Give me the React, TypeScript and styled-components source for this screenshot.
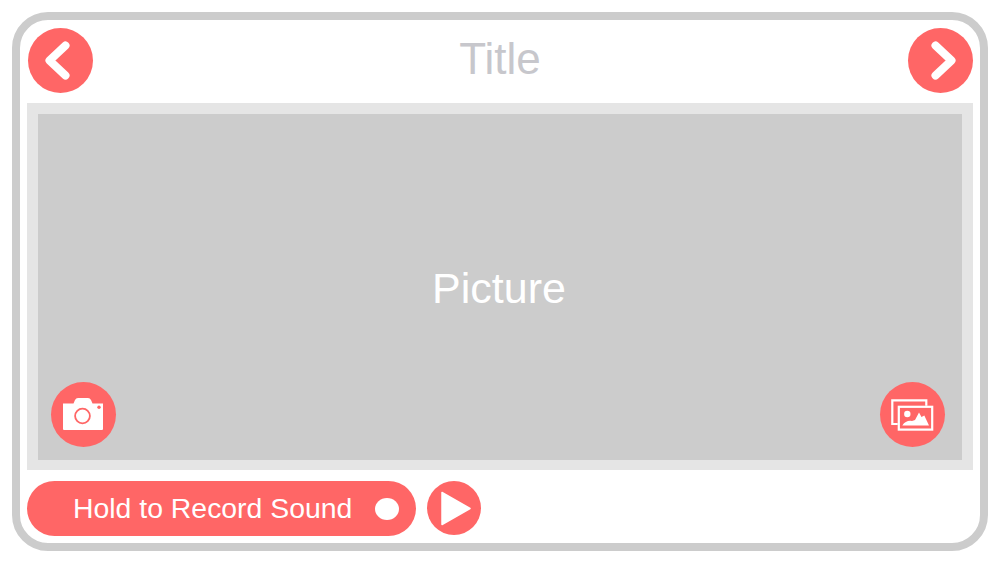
import React from 'react';
import styled, { createGlobalStyle } from 'styled-components';

const coral = '#ff6666';

const GlobalStyle = createGlobalStyle`
    html, body {
        margin: 0;
        padding: 0;
        background: #ffffff;
        font-family: "Liberation Sans", Arial, sans-serif;
    }
`;

const Page = styled.div`
    width: 1000px;
    height: 563px;
    box-sizing: border-box;
    padding: 12px;
    overflow: hidden;
`;

const Frame = styled.div`
    width: 976px;
    height: 539px;
    box-sizing: border-box;
    border: 8px solid #cccccc;
    border-radius: 36px;
    padding: 7.5px 7px 7px;
    display: flex;
    flex-direction: column;
`;

const Header = styled.header`
    display: flex;
    align-items: center;
    justify-content: space-between;
    height: 65px;
    padding: 0 0.5px 0 0.5px;
`;

const Title = styled.h1`
    margin: 0 0 2px;
    font-size: 44px;
    font-weight: 400;
    color: #c7c7cc;
`;

const RoundButton = styled.button<{ $size: number }>`
    width: ${({ $size }) => $size}px;
    height: ${({ $size }) => $size}px;
    flex: none;
    padding: 0;
    border: none;
    border-radius: 50%;
    background: ${coral};
    display: flex;
    align-items: center;
    justify-content: center;
`;

const PictureFrame = styled.section`
    flex: none;
    height: 367px;
    margin-top: 10.5px;
    box-sizing: border-box;
    border: solid #e5e5e5;
    border-width: 11px 11px 10px;
    background: #cccccc;
    position: relative;
    display: flex;
    align-items: center;
    justify-content: center;
`;

const PictureLabel = styled.span`
    font-size: 43px;
    color: #ffffff;
    margin: 2px 2px 0 0;
`;

const OverlayButton = styled(RoundButton)<{ $side: 'left' | 'right' }>`
    position: absolute;
    bottom: 13px;
    ${({ $side }) => ($side === 'left' ? 'left: 12.5px;' : 'right: 17px;')}
`;

const Footer = styled.footer`
    display: flex;
    align-items: flex-start;
    gap: 11px;
    margin-top: 11px;
`;

const RecordButton = styled.button`
    width: 389px;
    height: 55px;
    box-sizing: border-box;
    border: none;
    border-radius: 28px;
    background: ${coral};
    color: #ffffff;
    padding: 0 17px 0 46px;
    display: flex;
    align-items: center;
    justify-content: space-between;
    font-family: inherit;
    font-size: 28.4px;
`;

const RecordDot = styled.span`
    width: 24px;
    height: 22px;
    border-radius: 50%;
    background: #ffffff;
`;

const Chevron = ({ direction }: { direction: 'left' | 'right' }) => (
    <svg width="65" height="65" viewBox="0 0 65 65" fill="none">
        <path
            d={direction === 'left' ? 'M37.5 17.5 L21.5 32.5 L37.5 47.5' : 'M27.5 17.5 L43.5 32.5 L27.5 47.5'}
            stroke="#fff"
            strokeWidth="8"
            strokeLinecap="round"
            strokeLinejoin="round"
        />
    </svg>
);

const CameraIcon = () => (
    <svg width="40" height="34" viewBox="0 0 40 34">
        <path
            fill="#fff"
            d="M0 5.5 H10.5 L12 2 Q13 0 15 0 H25 Q27 0 28 2 L29.5 5.5 H40 V31 Q40 32 39 32 H1 Q0 32 0 31 Z"
        />
        <circle cx="19.5" cy="18" r="7.4" fill="none" stroke={coral} strokeWidth="1.8" />
        <circle cx="36" cy="9.3" r="1.7" fill={coral} />
    </svg>
);

const GalleryIcon = () => (
    <svg width="44" height="32" viewBox="0 0 44 32">
        <path d="M6.7 25 H1.3 V1.3 H35.3 V6.7" fill="none" stroke="#fff" strokeWidth="2.2" />
        <rect x="7.8" y="7.8" width="33.4" height="22.8" fill="none" stroke="#fff" strokeWidth="2.2" />
        <circle cx="16.3" cy="15" r="3.2" fill="#fff" />
        <path d="M11.3 26.5 Q15 21 21 22 L24 21 L28 13.5 L30.5 18 L33.3 16.5 L38 26.5 Z" fill="#fff" />
    </svg>
);

const PlayIcon = () => (
    <svg width="54" height="54" viewBox="0 0 54 54">
        <path d="M15 11.5 L43 27.5 L15 43.5 Z" fill="#fff" stroke="#fff" strokeWidth="1.5" strokeLinejoin="round" />
    </svg>
);

const App = () => {
    return (
        <>
            <GlobalStyle />
            <Page>
                <Frame>
                    <Header>
                        <RoundButton $size={65}><Chevron direction="left" /></RoundButton>
                        <Title>Title</Title>
                        <RoundButton $size={65}><Chevron direction="right" /></RoundButton>
                    </Header>
                    <PictureFrame>
                        <PictureLabel>Picture</PictureLabel>
                        <OverlayButton $size={65} $side="left"><CameraIcon /></OverlayButton>
                        <OverlayButton $size={65} $side="right"><GalleryIcon /></OverlayButton>
                    </PictureFrame>
                    <Footer>
                        <RecordButton>
                            <span>Hold to Record Sound</span>
                            <RecordDot />
                        </RecordButton>
                        <RoundButton $size={54}><PlayIcon /></RoundButton>
                    </Footer>
                </Frame>
            </Page>
        </>
    );
};

export default App;
